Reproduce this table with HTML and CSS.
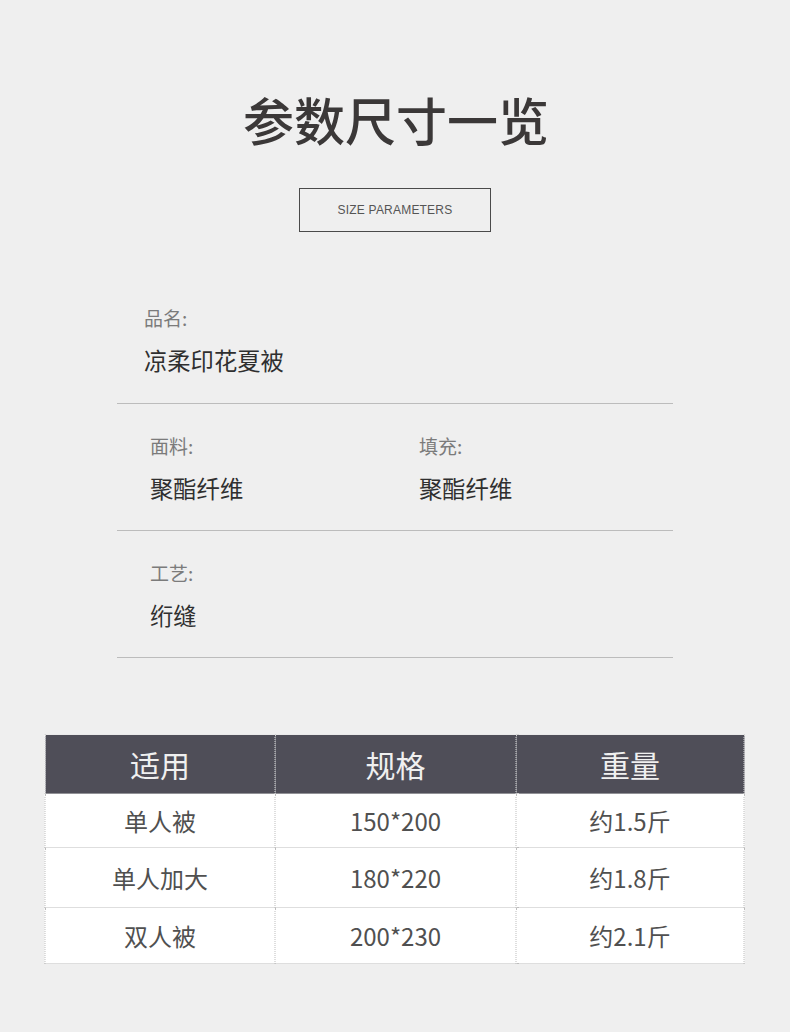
FILE: index.html
```html
<!DOCTYPE html>
<html lang="zh-CN">
<head>
<meta charset="utf-8">
<title>参数尺寸一览</title>
<link rel="stylesheet" href="styles.css">
</head>
<body>
<div class="page">
  <h1 class="title">参数尺寸一览</h1>
  <div class="subtitle">SIZE PARAMETERS</div>

  <div class="info">
    <div class="row row-first">
      <div class="field">
        <div class="label">品名:</div>
        <div class="value">凉柔印花夏被</div>
      </div>
    </div>
    <div class="row">
      <div class="field">
        <div class="label">面料:</div>
        <div class="value">聚酯纤维</div>
      </div>
      <div class="field field-right">
        <div class="label">填充:</div>
        <div class="value">聚酯纤维</div>
      </div>
    </div>
    <div class="row">
      <div class="field">
        <div class="label">工艺:</div>
        <div class="value">绗缝</div>
      </div>
    </div>
  </div>

  <table class="size-table">
    <colgroup>
      <col class="c1"><col class="c2"><col class="c3">
    </colgroup>
    <thead>
      <tr class="head"><th>适用</th><th>规格</th><th>重量</th></tr>
    </thead>
    <tbody>
      <tr class="r1"><td>单人被</td><td>150*200</td><td>约1.5斤</td></tr>
      <tr class="r2"><td>单人加大</td><td>180*220</td><td>约1.8斤</td></tr>
      <tr class="r3"><td>双人被</td><td>200*230</td><td>约2.1斤</td></tr>
    </tbody>
  </table>
</div>
</body>
</html>
```

FILE: styles.css
```css
html, body {
  margin: 0;
  padding: 0;
  background: #efefef;
}
body {
  font-family: "Noto Sans CJK SC", "Noto Sans", sans-serif;
  color: #333;
}
.page {
  width: 790px;
  height: 1032px;
  padding-top: 91px;
  box-sizing: border-box;
  display: flex;
  flex-direction: column;
  align-items: center;
}
.title {
  margin: 0;
  font-size: 51px;
  line-height: 56px;
  font-weight: 500;
  color: #3b3838;
  letter-spacing: 0;
  transform: translateX(1px);
}
.subtitle {
  margin-top: 41px;
  width: 192px;
  height: 44px;
  box-sizing: border-box;
  border: 1px solid #4a4a4a;
  display: flex;
  align-items: center;
  justify-content: center;
  font-family: "Liberation Sans", Arial, sans-serif;
  font-size: 12px;
  color: #555;
  letter-spacing: 0.2px;
}
.info {
  margin-top: 44px;
  width: 556px;
}
.row {
  display: flex;
  padding: 32px 0 29px 33px;
  border-bottom: 1px solid #bcbcbc;
}
.row-first {
  padding-left: 27px;
  padding-bottom: 30px;
}
.field {
  width: 269px;
}
.field-right {
  width: auto;
}
.label {
  font-size: 19px;
  line-height: 20px;
  color: #7b7b7b;
}
.value {
  margin-top: 19px;
  font-size: 23.3px;
  line-height: 26px;
  color: #2f2f2f;
}
.size-table {
  margin-top: 76px;
  width: 699px;
  border-collapse: collapse;
  background: #fff;
  table-layout: fixed;
  transform: translateX(-0.5px);
}
.c1 { width: 230px; }
.c2 { width: 241px; }
.c3 { width: 228px; }
.size-table th,
.size-table td {
  border: 1px dotted #bdbdbd;
  text-align: center;
  vertical-align: middle;
  padding: 0;
}
.size-table th {
  background: #4f4e58;
  color: #f0f0f0;
  font-size: 30px;
  font-weight: 400;
  height: 58px;
  border-color: #d4d4d4;
}
.size-table td {
  font-size: 24px;
  color: #505050;
  font-weight: 400;
}
.r1 td { height: 53px; }
.r2 td { height: 59px; }
.r3 td { height: 55px; }
```
